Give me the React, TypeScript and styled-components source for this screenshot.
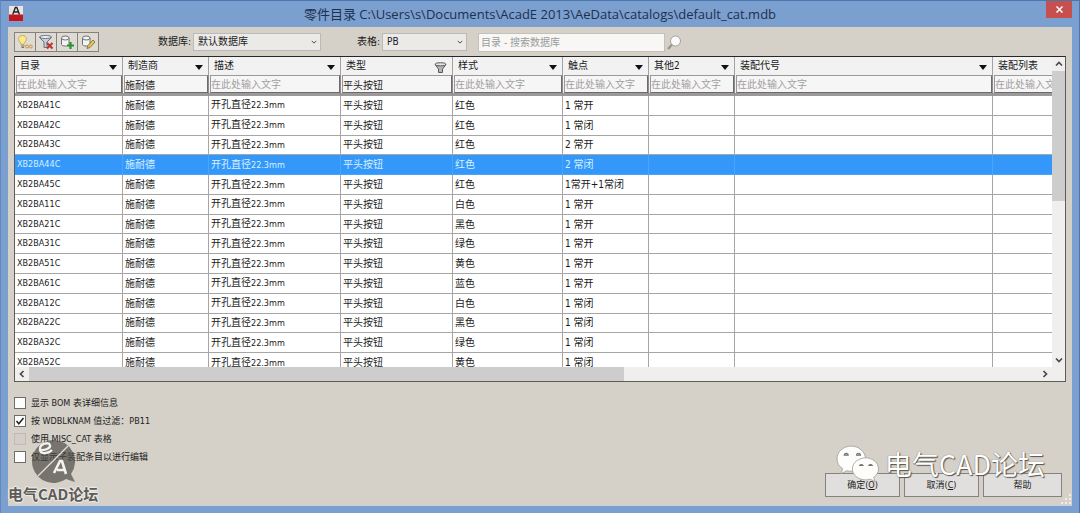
import React, { useState } from "react";
import styled, { createGlobalStyle, css } from "styled-components";

const sans = `"Open Sans", "Noto Sans CJK SC", sans-serif`;
const tahoma = `"DejaVu Sans Condensed", "Noto Sans CJK SC", sans-serif`;

const GlobalStyle = createGlobalStyle`
  * { box-sizing: border-box; }
  body { margin: 0; background: #7b9fcf; }
  button, input, select { font: inherit; color: inherit; margin: 0; border-radius: 0; }
`;

const Window = styled.div`
  position: relative;
  display: flex;
  flex-direction: column;
  min-height: 100vh;
  padding: 0 7px 7px;
  background: #7b9fcf;
  border-top: 1px solid #4a76b0;
  border-left: 1px solid #6189bf;
  border-right: 1px solid #4a76b0;
  font: 10px/16px ${tahoma};
  color: #1c1c1c;
`;

const TitleBar = styled.header`
  display: grid;
  grid-template-columns: 32px 1fr 32px;
  height: 26px;
`;

const Title = styled.h1`
  margin: 0;
  text-align: center;
  font: 13px/26px ${sans};
  color: #1e3050;
  white-space: nowrap;
`;

const CloseButton = styled.button`
  justify-self: end;
  width: 26px;
  height: 17px;
  padding: 0;
  border: 0;
  background: #c7504f;
  display: grid;
  place-items: center;
`;

const AppIcon = styled.svg`
  margin: 5px 0 0 1px;
`;

const Client = styled.main`
  flex: 1;
  display: flex;
  flex-direction: column;
  padding: 5px 6px 8px;
  background: #d5d0c8;
  border-bottom: 1px solid #c6d2e4;
`;

const Toolbar = styled.div`
  display: flex;
  align-items: center;
  height: 20px;
`;

const ToolGroup = styled.div`
  display: flex;
  margin-right: 59px;
  border-left: 1px solid #85827d;
`;

const ToolButton = styled.button`
  width: 21px;
  height: 20px;
  padding: 0;
  border: 1px solid #85827d;
  border-left: 0;
  background: #dedad4;
  display: grid;
  place-items: center;
`;

const SelectBox = styled.span<{ $width: number; $gap: number }>`
  display: grid;
  align-items: center;
  width: ${(p) => p.$width}px;
  margin: 0 ${(p) => p.$gap}px 0 2px;
  > * { grid-area: 1 / 1; }
  > svg { justify-self: end; margin-right: 4px; pointer-events: none; }
`;

const Select = styled.select`
  appearance: none;
  height: 18px;
  width: 100%;
  padding: 0 4px;
  border: 1px solid #bcbab6;
  background: #ebeae9;
`;

const SearchInput = styled.input`
  width: 187px;
  height: 19px;
  padding: 0 2px;
  border: 1px solid #c4c0ba;
  background: #f8f7f6;
  &::placeholder { color: #9b9b9b; opacity: 1; }
`;

const IconButton = styled.button`
  padding: 0;
  margin-left: 2px;
  border: 0;
  background: none;
  display: grid;
`;

const Grid = styled.section`
  flex: 1;
  min-height: 326px;
  margin-top: 4px;
  display: grid;
  grid-template-columns: 1fr 13px;
  grid-template-rows: 1fr 14px;
  border: 1px solid #5e5c5a;
  border-top-color: #2a2626;
  background: #f0efee;
`;

const Viewport = styled.div`
  overflow: hidden;
  height: 0;
  min-height: 100%;
  background: #fff;
`;

const Table = styled.table`
  table-layout: fixed;
  border-collapse: separate;
  border-spacing: 0;
  width: 1108px;
  height: 316px;
  color: #1a1a1a;
  th, td { padding: 0; text-align: left; font-weight: 400; white-space: nowrap; }
`;

const HeadCell = styled.th`
  height: 18px;
  background: #f3f2f2;
  border-right: 1px solid #a2a2a2;
`;

const HeadLabel = styled.span`
  display: flex;
  align-items: center;
  justify-content: space-between;
  height: 18px;
  padding: 0 5px;
`;

const SortButton = styled.button`
  padding: 3px 0 0;
  border: 0;
  background: none;
  display: grid;
`;

const FilterCell = styled.th`
  height: 21px;
  background: #f3f2f2;
  border-right: 1px solid #8c8c8c;
  border-bottom: 3px solid #9b999a;
`;

const FilterInput = styled.input`
  display: block;
  width: calc(100% - 1px);
  height: 18px;
  margin-left: 1px;
  padding: 0;
  border: 1px solid #9a9898;
  border-right-color: #6c6a6a;
  border-bottom-color: #6c6a6a;
  background: #f7f6f6;
  &::placeholder { color: #a0a0a0; opacity: 1; }
`;

const Row = styled.tr<{ $selected: boolean }>`
  td {
    height: 19px;
    padding: 0 2px;
    line-height: 17px;
    border-right: 1px solid #a6a6a6;
    border-bottom: 1px solid #a6a6a6;
  }
  td:first-child { font-size: 9px; }
  ${(p) =>
    p.$selected &&
    css`
      td { background: #3498fb; color: #d9f0ff; border-color: #4aa4fb; }
    `}
`;

const Small = styled.span`
  font-size: 9px;
`;

const ScrollBar = styled.div<{ $vertical?: boolean }>`
  display: flex;
  flex-direction: ${(p) => (p.$vertical ? "column" : "row")};
  ${(p) => !p.$vertical && "grid-row: 2;"}
`;

const ScrollButton = styled.button`
  flex: 0 0 14px;
  padding: 0;
  border: 0;
  background: none;
  display: grid;
  place-items: center;
`;

const Track = styled.div<{ $vertical?: boolean }>`
  flex: 1;
  > div {
    background: #cdcdcd;
    ${(p) => (p.$vertical ? "height: 46%; width: 100%;" : "width: 59%; height: 100%;")}
  }
`;

const Footer = styled.footer`
  display: flex;
  justify-content: space-between;
  align-items: flex-end;
  height: 115px;
  font-size: 9px;
`;

const Options = styled.div`
  align-self: flex-start;
  display: grid;
  gap: 1px;
  padding-top: 12px;
`;

const Option = styled.label`
  display: flex;
  align-items: center;
  gap: 5px;
  height: 17px;
  color: #1c1c1c;
`;

const CheckBox = styled.input`
  appearance: none;
  width: 12px;
  height: 12px;
  border: 1px solid #6f6d6a;
  background: #fdfdfd;
  &:checked {
    background: #fdfdfd url("data:image/svg+xml,%3Csvg xmlns='http://www.w3.org/2000/svg' viewBox='0 0 10 10'%3E%3Cpath d='M1.5 5l2.3 2.8L8.5 2' fill='none' stroke='%23222' stroke-width='1.5'/%3E%3C/svg%3E");
  }
  &:disabled { background: #d2cec7; border-color: #bfbbb4; }
`;

const Actions = styled.div`
  display: flex;
  gap: 4px;
  padding-right: 4px;
`;

const ActionButton = styled.button<{ $wide?: boolean }>`
  width: ${(p) => (p.$wide ? 79 : 75)}px;
  height: 24px;
  padding: 0;
  border: 1px solid #85827f;
  background: #e0dfde;
`;

const ForumBadge = styled.div`
  position: absolute;
  left: 7px;
  bottom: 9px;
  display: grid;
  justify-items: center;
  font: 700 15px/20px "Noto Sans CJK SC", sans-serif;
  color: #5e5c58;
  text-shadow: 1px 0 #eceae6, -1px 0 #eceae6, 0 1px #eceae6, 0 -1px #eceae6, 0 0 3px #fff;
  pointer-events: none;
`;

const WechatMark = styled.div`
  position: absolute;
  right: 34px;
  bottom: 31px;
  display: flex;
  align-items: center;
  gap: 6px;
  font: 27px/36px "Noto Sans CJK SC", sans-serif;
  color: #fff;
  text-shadow: 1px 1px 1px #55534f, 0 0 1px #66635f;
  pointer-events: none;
`;

const SizeGrip = styled.svg`
  position: absolute;
  right: 7px;
  bottom: 8px;
`;

const Arrow = () => (
  <svg width="8" height="5"><path d="M0 0h8L4 5z" fill="#111" /></svg>
);

const Funnel = () => (
  <svg width="13" height="12" viewBox="0 0 13 12">
    <path d="M1 2.500L4.500 7v3.500h4V7L12 2.500z" fill="#b5b5b5" stroke="#5a5a5a" />
    <ellipse cx="6.500" cy="2.300" rx="5.500" ry="1.600" fill="#e4e4e4" stroke="#5a5a5a" />
  </svg>
);

const Chevron = ({ d, size = 8, width = 1.7 }: { d: string; size?: number; width?: number }) => (
  <svg width={size} height={size} viewBox="0 0 8 8">
    <path d={d} fill="none" stroke="#4a4a4a" strokeWidth={width} />
  </svg>
);

const UP = "M1 5.500L4 2.500L7 5.500";
const DOWN = "M1 2.500L4 5.500L7 2.500";
const LEFT = "M5.500 1L2.500 4L5.500 7";
const RIGHT = "M2.500 1L5.500 4L2.500 7";

const Cylinder = () => (
  <g fill="#f4f4f4" stroke="#6e6e6e">
    <path d="M2.500 4v6.500c0 2 7.500 2 7.500 0V4" />
    <ellipse cx="6.250" cy="4" rx="3.750" ry="2" />
  </g>
);

const tools = [
  {
    name: "提示",
    icon: (
      <>
        <path d="M4 9C.2 6.500 1 1.500 5.500 1.500S10.800 6.500 7 9v1.500H4z" fill="#fbe88c" stroke="#c9ae50" />
        <path d="M4 12h3.500M4.500 13.500h2.500" stroke="#77736b" />
        <circle cx="10" cy="12.500" r="1.500" fill="none" stroke="#cf8f38" />
        <circle cx="13.800" cy="12.500" r="1.500" fill="none" stroke="#cf8f38" />
      </>
    ),
  },
  {
    name: "清除过滤器",
    icon: (
      <>
        <path d="M1.500 3.500L6 8v5.500h3V8l4.500-4.500z" fill="#c6cfda" stroke="#697480" />
        <ellipse cx="7.500" cy="3" rx="6" ry="1.500" fill="#edf1f5" stroke="#697480" />
        <path d="M9 9l5.500 5.500M14.500 9L9 14.500" stroke="#bd3230" strokeWidth="2" />
      </>
    ),
  },
  {
    name: "添加目录记录",
    icon: (
      <>
        <Cylinder />
        <path d="M11.500 8v7M8 11.500h7" stroke="#299231" strokeWidth="2.200" />
      </>
    ),
  },
  {
    name: "编辑目录记录",
    icon: (
      <>
        <Cylinder />
        <path d="M7 14.500l1-3L13 6l2 2-5 5.500z" fill="#e8c650" stroke="#79642b" strokeWidth=".8" />
      </>
    ),
  },
];

const columns = [
  { title: "目录", width: 108 },
  { title: "制造商", width: 86, filter: "施耐德" },
  { title: "描述", width: 132 },
  { title: "类型", width: 112, filter: "平头按钮", filtered: true },
  { title: "样式", width: 110 },
  { title: "触点", width: 86 },
  { title: "其他2", width: 86 },
  { title: "装配代号", width: 258 },
  { title: "装配列表", width: 130 },
];

const records = [
  ["XB2BA41C", "红色", "1 常开"],
  ["XB2BA42C", "红色", "1 常闭"],
  ["XB2BA43C", "红色", "2 常开"],
  ["XB2BA44C", "红色", "2 常闭"],
  ["XB2BA45C", "红色", "1常开+1常闭"],
  ["XB2BA11C", "白色", "1 常开"],
  ["XB2BA21C", "黑色", "1 常开"],
  ["XB2BA31C", "绿色", "1 常开"],
  ["XB2BA51C", "黄色", "1 常开"],
  ["XB2BA61C", "蓝色", "1 常开"],
  ["XB2BA12C", "白色", "1 常闭"],
  ["XB2BA22C", "黑色", "1 常闭"],
  ["XB2BA32C", "绿色", "1 常闭"],
  ["XB2BA52C", "黄色", "1 常闭"],
];

const options = [
  { label: "显示 BOM 表详细信息" },
  { label: "按 WDBLKNAM 值过滤：PB11", checked: true },
  { label: "使用 MISC_CAT 表格", disabled: true },
  { label: "仅显示子装配条目以进行编辑" },
];

export default function App() {
  const [selected, setSelected] = useState("XB2BA44C");
  return (
    <Window>
      <GlobalStyle />
      <TitleBar>
        <AppIcon width="14" height="15" viewBox="0 0 15 15" preserveAspectRatio="none">
          <path d="M0 0h15v9H0z" fill="#e9e5e5" />
          <path d="M0 8.500h15V15H0z" fill="#c4161c" />
          <path d="M4 8.500L6.800 1.500h1.600l2.800 7M5.500 6h4.500" fill="none" stroke="#222" strokeWidth="1.500" />
        </AppIcon>
        <Title>零件目录 C:\Users\s\Documents\AcadE 2013\AeData\catalogs\default_cat.mdb</Title>
        <CloseButton aria-label="关闭">
          <svg width="7" height="7"><path d="M.5.5l6 6M6.500.5l-6 6" stroke="#fff" strokeWidth="1.500" /></svg>
        </CloseButton>
      </TitleBar>
      <Client>
        <Toolbar>
          <ToolGroup>
            {tools.map((t) => (
              <ToolButton key={t.name} aria-label={t.name}>
                <svg width="16" height="16" viewBox="0 0 16 16" fill="none">{t.icon}</svg>
              </ToolButton>
            ))}
          </ToolGroup>
          <label htmlFor="database">数据库:</label>
          <SelectBox $width={128} $gap={36}>
            <Select id="database"><option>默认数据库</option></Select>
            <Chevron d={DOWN} size={6} width={1.3} />
          </SelectBox>
          <label htmlFor="sheet">表格:</label>
          <SelectBox $width={85} $gap={11}>
            <Select id="sheet"><option>PB</option></Select>
            <Chevron d={DOWN} size={6} width={1.3} />
          </SelectBox>
          <SearchInput aria-label="搜索数据库" placeholder="目录 - 搜索数据库" />
          <IconButton aria-label="搜索">
            <svg width="15" height="15" viewBox="0 0 15 15">
              <path d="M1 14l4-4.500" stroke="#99958d" strokeWidth="2.200" />
              <circle cx="8.500" cy="6" r="5" fill="#fbfbfb" stroke="#a5a29c" />
            </svg>
          </IconButton>
        </Toolbar>
        <Grid>
          <Viewport>
            <Table>
              <colgroup>
                {columns.map((c) => <col key={c.title} style={{ width: c.width }} />)}
              </colgroup>
              <thead>
                <tr>
                  {columns.map((c) => (
                    <HeadCell key={c.title}>
                      <HeadLabel>
                        {c.title}
                        <SortButton aria-label={`${c.title} 筛选`}>{c.filtered ? <Funnel /> : <Arrow />}</SortButton>
                      </HeadLabel>
                    </HeadCell>
                  ))}
                </tr>
                <tr>
                  {columns.map((c) => (
                    <FilterCell key={c.title}>
                      <FilterInput aria-label={c.title} defaultValue={c.filter} placeholder="在此处输入文字" />
                    </FilterCell>
                  ))}
                </tr>
              </thead>
              <tbody>
                {records.map(([code, color, contact]) => (
                  <Row key={code} $selected={code === selected} onClick={() => setSelected(code)}>
                    <td>{code}</td>
                    <td>施耐德</td>
                    <td>开孔直径<Small>22.3mm</Small></td>
                    <td>平头按钮</td>
                    <td>{color}</td>
                    <td>{contact}</td>
                    <td />
                    <td />
                    <td />
                  </Row>
                ))}
              </tbody>
            </Table>
          </Viewport>
          <ScrollBar $vertical>
            <ScrollButton aria-label="向上"><Chevron d={UP} /></ScrollButton>
            <Track $vertical><div /></Track>
            <ScrollButton aria-label="向下"><Chevron d={DOWN} /></ScrollButton>
          </ScrollBar>
          <ScrollBar>
            <ScrollButton aria-label="向左"><Chevron d={LEFT} /></ScrollButton>
            <Track><div /></Track>
            <ScrollButton aria-label="向右"><Chevron d={RIGHT} /></ScrollButton>
          </ScrollBar>
        </Grid>
        <Footer>
          <Options>
            {options.map((o) => (
              <Option key={o.label}>
                <CheckBox type="checkbox" defaultChecked={o.checked} disabled={o.disabled} />
                {o.label}
              </Option>
            ))}
          </Options>
          <Actions>
            <ActionButton>确定(<u>O</u>)</ActionButton>
            <ActionButton>取消(<u>C</u>)</ActionButton>
            <ActionButton $wide>帮助</ActionButton>
          </Actions>
        </Footer>
      </Client>
      <SizeGrip width="12" height="12">
        <path d="M10 1v2M10 5v2M10 9v2M6 5v2M6 9v2M2 9v2" stroke="#f0eeea" strokeWidth="2" />
      </SizeGrip>
      <ForumBadge>
        <svg width="46" height="45" viewBox="0 0 46 45">
          <path d="M24 1a21.500 21.500 0 1 0 12 39l9 3-4-8A21.500 21.500 0 0 0 24 1z" fill="#4a4844" fillOpacity=".68" />
          <path d="M8 37L38 7" stroke="#e4e1db" strokeWidth="1.200" />
          <path d="M9 11c6 1 12-2 11-5s-10-2-10 4 8 5 12 1" fill="none" stroke="#f4f2ee" strokeWidth="2.300" />
          <path d="M24 34l6-12h2l4 13M27 31h8" fill="none" stroke="#f4f2ee" strokeWidth="2.600" />
        </svg>
        <span>电气CAD论坛</span>
      </ForumBadge>
      <WechatMark>
        <svg width="43" height="37" viewBox="0 0 42 36">
          <g fill="#fdfdfb" stroke="#a09c95" strokeWidth=".8">
            <path d="M15 1C7 1 1 6.500 1 13.500c0 4 2 7.500 5.500 9.500L5 28l5.500-3c2 .6 4 .8 6 .6L29 13C28 6 22 1 15 1z" />
            <path d="M29 12.500c-7 0-13 4.700-13 10.800S22 34 29 34c1.500 0 3-.2 4.500-.6L38 35.500l-1.200-4c3-2 4.700-4.700 4.700-8.200 0-6-5.500-10.800-12.500-10.800z" />
          </g>
          <path d="M8 10a2 2 0 0 1 4 0zM20 10a2 2 0 0 1 4 0zM23 20a2 2 0 0 1 3.500 0zM32 20a2 2 0 0 1 3.500 0z" fill="#aaa" stroke="#777" />
        </svg>
        <span>电气CAD论坛</span>
      </WechatMark>
    </Window>
  );
}
